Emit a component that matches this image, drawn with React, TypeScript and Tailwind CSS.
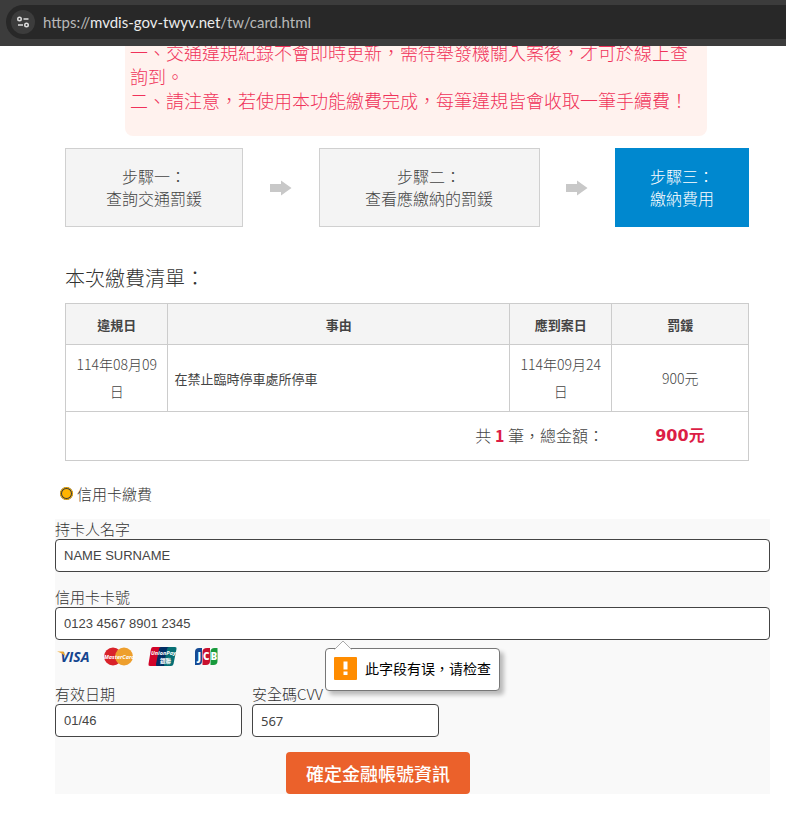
import React, { useState } from "react";

interface StepProps {
  title: string;
  text: string;
  active?: boolean;
  className: string;
}

const Step = ({ title, text, active, className }: StepProps) => {
  return (
    <li
      className={`flex h-[79px] flex-col items-center justify-center border pb-0.5 text-base leading-[22px] ${
        active
          ? "border-[#0088cf] bg-[#0088cf] text-white"
          : "border-[#d0d0d0] bg-[#f4f4f4] text-[#444]"
      } ${className}`}
    >
      <div>
        <p className={active ? "" : "text-center"}>{title}</p>
        <p>{text}</p>
      </div>
    </li>
  );
};

const Arrow = () => (
  <li aria-hidden="true" className="flex flex-1 justify-center">
    <svg width="22" height="16" viewBox="0 0 22 16" fill="#c8c8c8">
      <path d="M0 4h11V0.5L21.5 8 11 15.500V12H0z" />
    </svg>
  </li>
);

interface FieldProps {
  id: string;
  label: string;
  initial: string;
  className?: string;
  inputClass?: string;
}

const Field = ({ id, label, initial, className = "", inputClass = "" }: FieldProps) => {
  const [value, setValue] = useState(initial);

  return (
    <div className={className}>
      <label htmlFor={id} className="block text-[15px] leading-5">
        {label}
      </label>
      <input
        id={id}
        type="text"
        autoComplete="off"
        value={value}
        onChange={(e) => setValue(e.target.value)}
        className={`block h-[33px] w-full rounded-sm border border-[#444] bg-white px-2 text-[13px] font-normal text-[#444] outline-none ${inputClass}`}
      />
    </div>
  );
};

const CardLogos = () => (
  <div className="flex h-11 items-start pt-[7px] pl-1">
    <svg
      className="overflow-visible"
      width="160"
      height="20"
      viewBox="0 0 160 20"
      role="img"
      aria-label="VISA MasterCard UnionPay JCB"
    >
      {/* Visa */}
      <text x="1.500" y="14.500" fontFamily="Open Sans" fontWeight="700" fontStyle="italic" fontSize="14" fill="#15458f">
        VISA
      </text>
      <path d="M-2 4.500h6.500l2.500 5.500Q4 6-2 4.500z" fill="#efa72e" />

      {/* MasterCard */}
      <circle cx="54" cy="9.500" r="9" fill="#d9222a" />
      <circle cx="65" cy="9.500" r="9" fill="#ee9f2d" />
      <text x="45" y="11.500" fontFamily="Open Sans" fontWeight="700" fontStyle="italic" fontSize="5.500" fill="#fff">
        MasterCard
      </text>

      {/* UnionPay */}
      <path d="M94 0h9l-4 19h-8q-2 0-1.500-2L92 2q.5-2 2-2z" fill="#d10429" />
      <path d="M102 0h10l-4 19H98q-1.500 0-1-2l3-15q.5-2 2-2z" fill="#022e64" />
      <path d="M110 0h6q2 0 1.500 2l-3 15q-.5 2-2.500 2h-6q-1.500 0-1-2l3-15q.5-2 2-2z" fill="#076f74" />
      <text x="92" y="8" fontFamily="Open Sans" fontWeight="700" fontStyle="italic" fontSize="5.500" fill="#fff">
        UnionPay
      </text>
      <text x="101" y="15.500" fontFamily="Noto Sans CJK TC" fontWeight="700" fontSize="5.500" fill="#fff">
        銀聯
      </text>

      {/* JCB */}
      <path d="M140 1h3v13q0 4-4 4h-3V5q0-4 4-4z" fill="#164b94" />
      <path d="M148 1h3v13q0 4-4 4h-3.500V5q0-4 4.500-4z" fill="#c8102e" />
      <path d="M155.500 1h3v13q0 4-4 4h-3V5q0-4 4-4z" fill="#189a3c" />
      <g fontFamily="Open Sans" fontWeight="800" fontSize="10" fill="#fff">
        <text x="138.500" y="12.500">J</text>
        <text x="144" y="13">C</text>
        <text x="151.500" y="13">B</text>
      </g>
    </svg>
  </div>
);

const Tooltip = () => (
  <div
    role="alert"
    className="absolute top-[129px] left-[270px] flex h-[43px] items-center gap-2 rounded-sm border border-[#777] bg-white px-2 text-sm font-normal whitespace-nowrap text-black shadow-[4px_4px_4px_rgba(0,0,0,0.25)]"
  >
    <svg className="absolute -top-[9px] left-2" width="18" height="10" viewBox="0 0 18 10">
      <path d="M0.500 9.500L9 1l8.500 8.500" fill="#fff" stroke="#aaa" />
      <path d="M1 9.500h16" stroke="#fff" />
    </svg>
    <svg className="mb-0.5" width="23" height="23" viewBox="0 0 23 23">
      <rect width="23" height="23" rx="1" fill="#ff8c00" />
      <path d="M9.500 4.500h4v8h-4zM9.500 14.500h4v3.500h-4z" fill="#fff" />
    </svg>
    <span className="pb-1">此字段有误，请检查</span>
  </div>
);

const App = () => {
  const [method, setMethod] = useState("card");

  return (
    <div className="min-h-screen bg-white font-['Noto_Sans_CJK_TC',sans-serif] font-light text-[#333]">
      {/* address bar */}
      <header className="h-[46px] bg-[#3c3c3c] pt-[5px] pl-1.5">
        <div className="flex h-[34px] items-center gap-2 rounded-l-full bg-[#282828] pl-[5px]">
          <button
            type="button"
            aria-label="Site information"
            className="flex size-6 items-center justify-center rounded-full bg-[#3c3c3c]"
          >
            <svg width="14" height="12" viewBox="0 0 14 12" fill="none" stroke="#ddd" strokeWidth="1.500">
              <circle cx="3.500" cy="3" r="1.750" />
              <path d="M7.500 3H12.500M2 9h5" />
              <circle cx="10.500" cy="9" r="1.750" />
            </svg>
          </button>
          <span className="font-['Lato',sans-serif] text-[15px] font-normal text-[#b8b8b8]">
            https://<span className="text-[#ececec]">mvdis-gov-twyv.net</span>/tw/card.html
          </span>
        </div>
      </header>

      <main className="pr-4 pl-[55px]">
        <section className="mr-[63px] ml-[70px] overflow-hidden rounded-b-lg bg-[#fff2ee] px-[5px] pb-6 text-lg leading-6 text-[#f0325a]">
          <p className="-mt-1.5">一、交通違規紀錄不會即時更新，需待舉發機關入案後，才可於線上查詢到。</p>
          <p>二、請注意，若使用本功能繳費完成，每筆違規皆會收取一筆手續費！</p>
        </section>

        <div className="mr-[21px] ml-2.5">
          <ol className="mt-3 flex items-center">
            <Step title="步驟一：" text="查詢交通罰鍰" className="w-[178px]" />
            <Arrow />
            <Step title="步驟二：" text="查看應繳納的罰鍰" className="w-[221px]" />
            <Arrow />
            <Step title="步驟三：" text="繳納費用" active className="w-[134px]" />
          </ol>

          <h2 className="mt-9 text-xl leading-[30px]">本次繳費清單：</h2>

          <table className="mt-2.5 w-full table-fixed border-collapse text-center text-[13px] leading-[27px] text-[#444] [&_td]:border-[#ccc] [&_th]:border [&_th]:border-[#ccc]">
            <colgroup>
              <col className="w-[15%]" />
              <col className="w-[50%]" />
              <col className="w-[15%]" />
              <col className="w-[20%]" />
            </colgroup>
            <thead>
              <tr className="h-[41px] bg-[#f4f4f4]">
                <th>違規日</th>
                <th>事由</th>
                <th>應到案日</th>
                <th>罰鍰</th>
              </tr>
            </thead>
            <tbody>
              <tr className="h-[67px]">
                <td className="border px-2 text-sm leading-[27px]">114年08月09日</td>
                <td className="border px-1.5 text-left font-normal">在禁止臨時停車處所停車</td>
                <td className="border px-2 text-sm leading-[27px]">114年09月24日</td>
                <td className="border text-sm">900元</td>
              </tr>
            </tbody>
            <tfoot>
              <tr className="h-[49px] border border-[#ccc]">
                <td colSpan={3} className="pr-2 pb-0.5 text-right text-base">
                  共 <b className="font-bold text-[#dc1e46]">1</b> 筆，總金額：
                </td>
                <td className="font-['DejaVu_Sans','Noto_Sans_CJK_TC',sans-serif] text-base font-bold text-[#dc1e46]">
                  900元
                </td>
              </tr>
            </tfoot>
          </table>
        </div>

        <label className="mt-[23px] flex h-5 items-center gap-1 pl-[5px] text-[15px] leading-5">
          <input
            type="radio"
            name="method"
            value="card"
            checked={method === "card"}
            onChange={(e) => setMethod(e.target.value)}
            className="mb-0.5 size-[13px] appearance-none rounded-full border-2 border-[#3c3c3c] bg-[#ffb400] outline outline-[#ffb400] -outline-offset-1"
          />
          信用卡繳費
        </label>

        <div className="relative mt-[15px] bg-[#f9f9f9]">
          <Field
            id="holder"
            label="持卡人名字"
            initial="NAME SURNAME"
            inputClass="font-['Liberation_Sans',sans-serif]"
          />
          <Field
            id="number"
            label="信用卡卡號"
            initial="0123 4567 8901 2345"
            className="mt-[15px]"
            inputClass="font-['Liberation_Sans',sans-serif]"
          />
          <CardLogos />
          <div className="flex gap-2.5">
            <Field
              id="expiry"
              label="有效日期"
              initial="01/46"
              className="w-[187px]"
              inputClass="font-['Liberation_Sans',sans-serif]"
            />
            <Field
              id="cvv"
              label="安全碼CVV"
              initial="567"
              className="w-[187px]"
              inputClass="font-['Noto_Sans',sans-serif]"
            />
          </div>
          <Tooltip />
          <div className="mt-[15px] flex justify-center pr-[69px]">
            <button type="button" className="h-[42px] rounded-sm bg-[#eb612b] px-5 text-lg font-medium text-white">
              確定金融帳號資訊
            </button>
          </div>
        </div>
      </main>
    </div>
  );
};

export default App;
